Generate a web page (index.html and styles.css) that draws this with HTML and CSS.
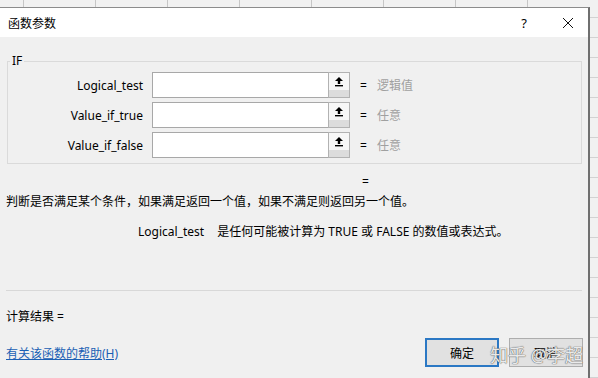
FILE: index.html
```html
<!DOCTYPE html>
<html>
  <head>
    <meta charset="utf-8" />
    <link rel="stylesheet" href="styles.css">
  </head>
  <body>
    <div class="dialog">
      <div class="titlebar">
        <span class="title">函数参数</span>
        <span class="help">?</span>
        <span class="close">
          <svg width="12" height="12" viewBox="0 0 12 12">
            <path d="M1 1 L11 11 M11 1 L1 11" stroke="#111" stroke-width="1" fill="none" />
          </svg>
        </span>
      </div>

      <div class="content">
        <fieldset class="group">
          <legend>IF</legend>
          <div class="arg-row">
            <label>Logical_test</label>
            <div class="ref-box">
              <span class="ref-input"></span>
              <span class="ref-btn">
                <svg width="10" height="11" viewBox="0 0 10 11">
                  <path d="M5 1 L9 5 L6.2 5 L6.2 8 L3.8 8 L3.8 5 L1 5 Z" fill="#000" />
                  <rect x="1" y="9" width="8" height="1.4" fill="#000" />
                </svg>
              </span>
            </div>
            <span class="eq">=</span>
            <span class="hint">逻辑值</span>
          </div>
          <div class="arg-row">
            <label>Value_if_true</label>
            <div class="ref-box">
              <span class="ref-input"></span>
              <span class="ref-btn">
                <svg width="10" height="11" viewBox="0 0 10 11">
                  <path d="M5 1 L9 5 L6.2 5 L6.2 8 L3.8 8 L3.8 5 L1 5 Z" fill="#000" />
                  <rect x="1" y="9" width="8" height="1.4" fill="#000" />
                </svg>
              </span>
            </div>
            <span class="eq">=</span>
            <span class="hint">任意</span>
          </div>
          <div class="arg-row">
            <label>Value_if_false</label>
            <div class="ref-box">
              <span class="ref-input"></span>
              <span class="ref-btn">
                <svg width="10" height="11" viewBox="0 0 10 11">
                  <path d="M5 1 L9 5 L6.2 5 L6.2 8 L3.8 8 L3.8 5 L1 5 Z" fill="#000" />
                  <rect x="1" y="9" width="8" height="1.4" fill="#000" />
                </svg>
              </span>
            </div>
            <span class="eq">=</span>
            <span class="hint">任意</span>
          </div>
        </fieldset>

        <div class="result-eq">=</div>
        <div class="desc">判断是否满足某个条件，如果满足返回一个值，如果不满足则返回另一个值。</div>
        <div class="arg-desc">
          <span class="arg-name">Logical_test</span>
          <span>是任何可能被计算为 TRUE 或 FALSE 的数值或表达式。</span>
        </div>

        <div class="separator"></div>
        <div class="calc">计算结果 =</div>

        <div class="footer">
          <a class="help-link" href="#">有关该函数的帮助(H)</a>
          <div class="buttons">
            <button class="btn btn-primary">确定</button>
            <button class="btn">取消</button>
            <span class="watermark">知乎 @李超</span>
          </div>
        </div>
      </div>
    </div>
  </body>
</html>
```

FILE: styles.css
```css
html,
body {
  margin: 0;
  padding: 0;
}

body {
  width: 598px;
  height: 378px;
  overflow: hidden;
  font-family: "Noto Sans", "Noto Sans CJK SC", sans-serif;
  font-size: 12px;
  color: #000;
  background-color: #f1f1f1;
  background-image:
    repeating-linear-gradient(90deg, transparent 0 23px, #c6c6c6 23px 24px, transparent 24px 72px),
    repeating-linear-gradient(180deg, transparent 0 17px, #d2d2d2 17px 18px, transparent 18px 20px);
}

.dialog {
  box-sizing: border-box;
  margin-top: 7px;
  width: 590px;
  height: 371px;
  background: #f0f0f0;
  border-top: 1px solid #8c8c8c;
  border-right: 2px solid #6f6f6f;
  display: flex;
  flex-direction: column;
  overflow: hidden;
}

.titlebar {
  height: 29px;
  flex-shrink: 0;
  background: #fff;
  display: flex;
  align-items: center;
  padding-left: 8px;
}
.title {
  flex: 1;
  font-size: 12px;
}
.help {
  font-size: 13px;
  margin-right: 35px;
}
.close {
  display: flex;
  margin-right: 14px;
}

.content {
  flex: 1;
  padding: 16px 5px 0 6px;
  display: flex;
  flex-direction: column;
}

.group {
  margin: 0 0 0 1px;
  padding: 3px 8px 5px 0;
  border: 1px solid #dadada;
  width: 575px;
  box-sizing: border-box;
}
.group legend {
  padding: 0 2px;
  margin-left: 2px;
  font-size: 12px;
  line-height: 16px;
}

.arg-row {
  display: flex;
  align-items: center;
  height: 26px;
  margin-top: 4px;
}
.arg-row:first-of-type {
  margin-top: 0;
}
.arg-row label {
  width: 135px;
  text-align: right;
  margin-right: 9px;
}
.ref-box {
  display: flex;
  width: 198px;
  height: 26px;
}
.ref-input {
  flex: 1;
  background: #fff;
  border: 1px solid #a8a8a8;
  border-right: none;
}
.ref-btn {
  border: 1px solid #b2b2b2;
  background: linear-gradient(#f7f7f7 0 72%, #dcdcdc 72%);
  display: flex;
  justify-content: center;
  padding-top: 3px;
  box-sizing: border-box;
  width: 22px;
}
.eq {
  margin-left: 10px;
  width: 17px;
}
.hint {
  color: #a0a0a0;
}

.result-eq {
  margin-top: 10px;
  padding-left: 356px;
  line-height: 16px;
}
.desc {
  margin-top: 4px;
  line-height: 16px;
}
.arg-desc {
  margin-top: 14px;
  padding-left: 132px;
  line-height: 16px;
}
.arg-name {
  margin-right: 10px;
}

.separator {
  margin-top: 50px;
  height: 1px;
  background: #d8d8d8;
  width: 576px;
  flex-shrink: 0;
}
.calc {
  margin-top: 18px;
  line-height: 16px;
}

.footer {
  margin-top: 13px;
  display: flex;
  align-items: center;
  justify-content: space-between;
}
.help-link {
  color: #1a5fb4;
  text-decoration: underline;
}
.buttons {
  display: flex;
  gap: 10px;
  position: relative;
}
.btn {
  width: 74px;
  height: 29px;
  font-family: inherit;
  font-size: 12px;
  background: #e1e1e1;
  border: 1px solid #adadad;
  padding: 0;
}
.btn-primary {
  border: 2px solid #2b78c4;
}

.watermark {
  position: absolute;
  right: 0;
  top: 3px;
  font-size: 18px;
  color: rgba(255, 255, 255, 0.9);
  text-shadow: 0 0 1px #555, 0 0 1px #555;
  white-space: nowrap;
}
```
